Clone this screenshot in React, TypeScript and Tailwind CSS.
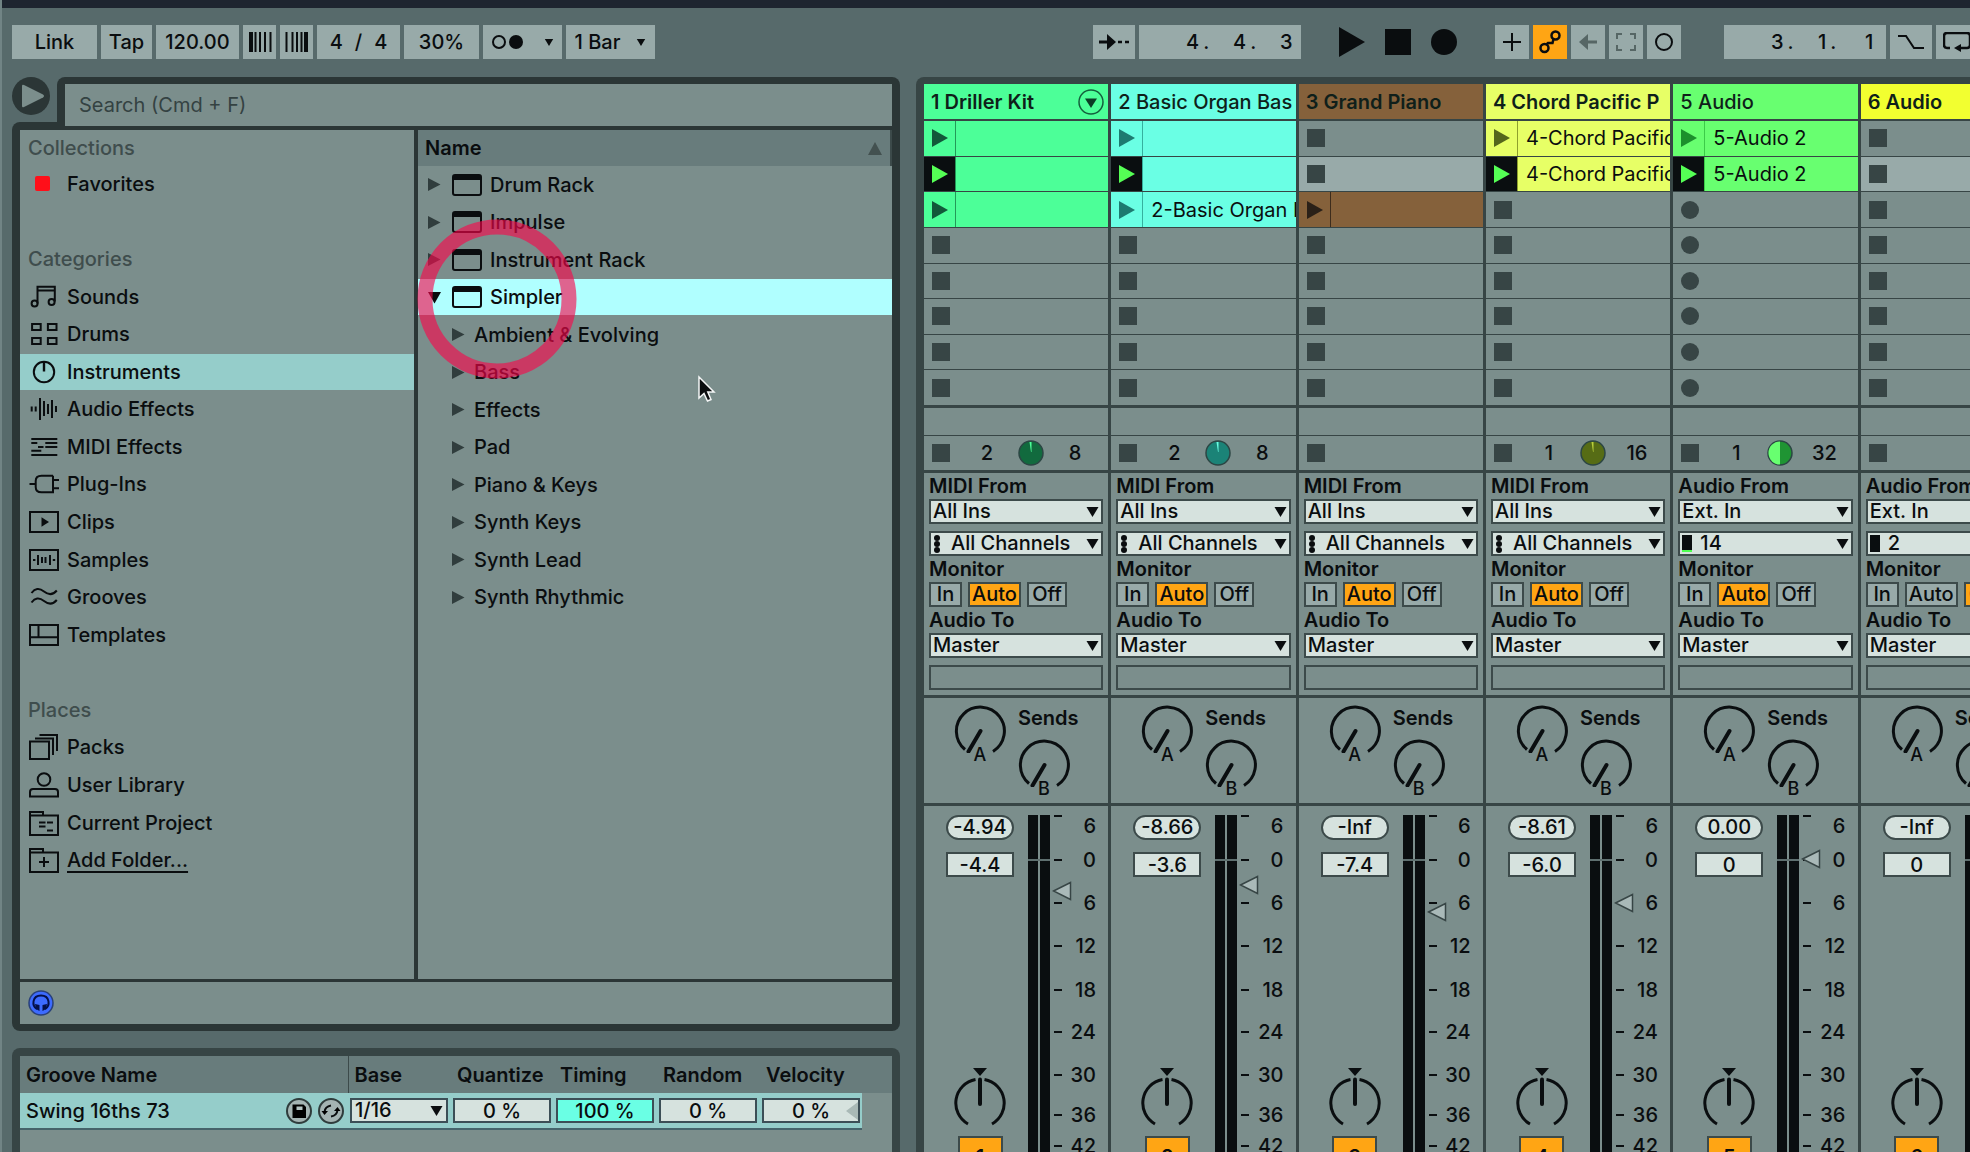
import type { ReactNode } from 'react';
import { clsx } from 'clsx';

interface Clip {
  name?: string;
  playing?: boolean;
}

interface Track {
  id: number;
  title: string;
  strong: boolean;
  kind: 'midi' | 'audio';
  bg: string;
  tri: string;
  // divider between launch button and clip name
  line: string;
  clips: (Clip | null)[];
  armed?: boolean;
  status?: { left: string; right: string; pie: string; hand: string; half?: boolean };
  channel: string;
  signal?: boolean;
  monitor: 'In' | 'Auto' | 'Off';
  peak: string;
  volume: string;
  faderY: number;
}

const TRACKS: Track[] = [
  {
    id: 1,
    title: '1 Driller Kit',
    strong: true,
    kind: 'midi',
    bg: 'bg-[#4cff98]',
    tri: 'text-[#12583a]',
    line: 'border-[#239a58]',
    clips: [{}, { playing: true }, {}],
    status: { left: '2', right: '8', pie: '#126a3e', hand: '#4cff98' },
    channel: 'All Channels',
    monitor: 'Auto',
    peak: '-4.94',
    volume: '-4.4',
    faderY: 85,
  },
  {
    id: 2,
    title: '2 Basic Organ Bas',
    strong: false,
    kind: 'midi',
    bg: 'bg-[#6affe4]',
    tri: 'text-[#1d7a70]',
    line: 'border-[#35b09e]',
    clips: [{}, { playing: true }, { name: '2-Basic Organ B' }],
    status: { left: '2', right: '8', pie: '#1b8377', hand: '#6affe4' },
    channel: 'All Channels',
    monitor: 'Auto',
    peak: '-8.66',
    volume: '-3.6',
    faderY: 79,
  },
  {
    id: 3,
    title: '3 Grand Piano',
    strong: true,
    kind: 'midi',
    bg: 'bg-[#85613b]',
    tri: 'text-[#2a2018]',
    line: 'border-[#3d2c1c]',
    clips: [null, null, {}],
    channel: 'All Channels',
    monitor: 'Auto',
    peak: '-Inf',
    volume: '-7.4',
    faderY: 106,
  },
  {
    id: 4,
    title: '4 Chord Pacific P',
    strong: true,
    kind: 'midi',
    bg: 'bg-[#e7ff66]',
    tri: 'text-[#55661c]',
    line: 'border-[#8ea02c]',
    clips: [{ name: '4-Chord Pacific' }, { name: '4-Chord Pacific', playing: true }],
    status: { left: '1', right: '16', pie: '#566c15', hand: '#b9cf3c' },
    channel: 'All Channels',
    monitor: 'Auto',
    peak: '-8.61',
    volume: '-6.0',
    faderY: 97,
  },
  {
    id: 5,
    title: '5 Audio',
    strong: false,
    kind: 'audio',
    bg: 'bg-[#68ff70]',
    tri: 'text-[#1c8f2c]',
    line: 'border-[#3ccb48]',
    clips: [{ name: '5-Audio 2' }, { name: '5-Audio 2', playing: true }],
    armed: true,
    status: { left: '1', right: '32', pie: '#1f9433', hand: '#68ff70', half: true },
    channel: '14',
    signal: true,
    monitor: 'Auto',
    peak: '0.00',
    volume: '0',
    faderY: 53,
  },
  {
    id: 6,
    title: '6 Audio',
    strong: true,
    kind: 'audio',
    bg: 'bg-[#f2ff30]',
    tri: 'text-[#666b14]',
    line: 'border-[#9a9f20]',
    clips: [],
    channel: '2',
    monitor: 'Off',
    peak: '-Inf',
    volume: '0',
    faderY: 53,
  },
];

const SCALE = [
  { label: '0', h: 'h-[44px]' },
  { label: '6', h: 'h-[42px]' },
  { label: '12', h: 'h-[44px]' },
  { label: '18', h: 'h-[43px]' },
  { label: '24', h: 'h-[41px]' },
  { label: '30', h: 'h-[45px]' },
  { label: '36', h: 'h-[35px]' },
  { label: '42', h: 'h-[28px]' },
];

const ICONS: Record<string, ReactNode> = {
  Sounds: (
    <>
      <path d="M8.5 19.5V2.8H25.8V17.5M8.5 6.6H25.8" />
      <circle cx="5.6" cy="19.6" r="3" />
      <circle cx="22.6" cy="17.9" r="3" />
    </>
  ),
  Drums: (
    <>
      <rect x="3.1" y="3" width="8.6" height="6" />
      <rect x="18.9" y="3" width="8.6" height="6" />
      <rect x="3.1" y="17" width="8.6" height="6" />
      <rect x="18.9" y="17" width="8.6" height="6" />
    </>
  ),
  Instruments: (
    <>
      <circle cx="15" cy="13" r="10.2" />
      <path d="M15 3V12.5" strokeWidth="2.4" />
    </>
  ),
  'Audio Effects': (
    <path d="M2.7 10.5v5M6.7 10.5v5M11 2v22M15 5v15M19 8v10M23 4v18M27 10v6" />
  ),
  'MIDI Effects': (
    <path d="M2.3 5h26M2.3 9h6M16.3 9h12M9 13h5.5M16.3 13h12M2.3 16.7h10M2.3 21h26" />
  ),
  'Plug-Ins': (
    <path d="M.5 13H6.500M24 4.700H12.500Q6.700 4.700 6.700 10V16Q6.700 21.300 12.500 21.300H24V4.700M24 9h6M24 17.300h6" />
  ),
  Clips: (
    <>
      <rect x="1" y="3" width="28" height="20" />
      <path d="M12.500 8.200L20 13L12.500 17.800Z" fill="currentColor" stroke="none" />
    </>
  ),
  Samples: (
    <>
      <rect x="1" y="3" width="28" height="20" />
      <path d="M4 13h2.400M9 8v10M13 10v6M16.500 10v6M21 8v10M23.800 13h2.400" />
    </>
  ),
  Grooves: (
    <path d="M2.500 9C6 4.500 10 3.500 15 7.500S24 11 27.800 6.500M2.500 18.500C6 14 10 13 15 17S24 20.500 27.800 16" />
  ),
  Templates: (
    <>
      <rect x="1" y="3" width="28" height="20" />
      <path d="M1 15.300H29M9.500 3V15.300" />
    </>
  ),
  Packs: (
    <path d="M1 7.500H20V25H1ZM6 4.500H24V21M10.500 1H28V17" />
  ),
  'User Library': (
    <>
      <circle cx="15" cy="7.500" r="6.300" />
      <path d="M1 24.500V20Q1 17 4 17H26Q29 17 29 20V24.500Z" />
    </>
  ),
  'Current Project': (
    <path d="M1 25V2H14V5.500H29V25ZM1 5.500H14M10 12.500h6.500M10 16.500h6.500M18 12.500h6M18 20.500h6" />
  ),
  'Add Folder...': (
    <path d="M1 25V2H14V5.500H29V25ZM1 5.500H14M10 15h10M15 10v10" />
  ),
};

const SIDEBAR = [
  'Favorites',
  '',
  '#Categories',
  'Sounds',
  'Drums',
  'Instruments',
  'Audio Effects',
  'MIDI Effects',
  'Plug-Ins',
  'Clips',
  'Samples',
  'Grooves',
  'Templates',
  '',
  '#Places',
  'Packs',
  'User Library',
  'Current Project',
  'Add Folder...',
];

const RACKS = ['Drum Rack', 'Impulse', 'Instrument Rack', 'Simpler'];
const FOLDERS = [
  'Ambient & Evolving',
  'Bass',
  'Effects',
  'Pad',
  'Piano & Keys',
  'Synth Keys',
  'Synth Lead',
  'Synth Rhythmic',
];

function ToolButton({
  label,
  className,
  children,
}: {
  label?: string;
  className: string;
  children: ReactNode;
}) {
  return (
    <button
      type="button"
      aria-label={label}
      className={clsx(
        'flex h-[34px] shrink-0 items-center justify-center whitespace-nowrap',
        className,
      )}
    >
      {children}
    </button>
  );
}

function Down({ className }: { className?: string }) {
  return (
    <svg viewBox="0 0 12 10" className={className} fill="currentColor" aria-hidden>
      <path d="M0 0H12L6 10Z" />
    </svg>
  );
}

function BarPosition({ parts }: { parts: string[] }) {
  return (
    <div className="flex h-[34px] w-[162px] shrink-0 items-center justify-end bg-[#98aaa9] pr-2">
      {parts.map((p, i) => (
        <span key={i} className={clsx('flex gap-1', i < 2 ? 'w-[47px]' : 'w-[13px]')}>
          <span>{p}</span>
          {i < 2 && <span>.</span>}
        </span>
      ))}
    </div>
  );
}

function Toolbar() {
  const tool = 'bg-[#98aaa9]';
  return (
    <header className="flex h-[69px] shrink-0 gap-1 pt-[17px] pl-3">
      <ToolButton className={clsx(tool, 'w-[85px]')}>Link</ToolButton>
      <ToolButton className={clsx(tool, 'w-[51px]')}>Tap</ToolButton>
      <ToolButton className={clsx(tool, 'w-[83px]')}>120.00</ToolButton>
      <ToolButton label="Nudge down" className={clsx(tool, 'w-[33px]')}>
        <svg width="24" height="20" stroke="currentColor" aria-hidden>
          <path d="M3 0V20" strokeWidth="4" />
          <path d="M7.500 0V20M12 0V20M17 0V20M22.500 0V20" strokeWidth="2" />
        </svg>
      </ToolButton>
      <ToolButton label="Nudge up" className={clsx(tool, 'w-[33px]')}>
        <svg width="24" height="20" stroke="currentColor" aria-hidden>
          <path d="M21 0V20" strokeWidth="4" />
          <path d="M16.500 0V20M12 0V20M7.500 0V20M1.500 0V20" strokeWidth="2" />
        </svg>
      </ToolButton>
      <ToolButton className={clsx(tool, 'w-[83px] gap-3')}>
        <span>4</span>
        <span>/</span>
        <span>4</span>
      </ToolButton>
      <ToolButton className={clsx(tool, 'w-[75px]')}>30%</ToolButton>
      <ToolButton label="Metronome" className={clsx(tool, 'w-[79px] gap-5')}>
        <svg width="33" height="16" aria-hidden>
          <circle cx="8" cy="8" r="6" fill="none" stroke="currentColor" strokeWidth="2" />
          <circle cx="25" cy="8" r="7" fill="currentColor" />
        </svg>
        <Down className="h-[7px] w-[10px]" />
      </ToolButton>
      <ToolButton className={clsx(tool, 'w-[89px] gap-4')}>
        <span>1 Bar</span>
        <Down className="h-[7px] w-[10px]" />
      </ToolButton>

      <ToolButton label="Follow" className={clsx(tool, 'ml-[434px] w-[42px]')}>
        <svg width="30" height="18" aria-hidden>
          <path d="M0 9H9" stroke="currentColor" strokeWidth="3" />
          <path d="M8 1L17 9L8 17Z" fill="currentColor" />
          <path d="M19 9H23M26 9H30" stroke="currentColor" strokeWidth="2.500" />
        </svg>
      </ToolButton>
      <BarPosition parts={['4', '4', '3']} />
      <div className="mx-[34px] flex h-[34px] shrink-0 items-center gap-5">
        <button type="button" aria-label="Play">
          <svg width="26" height="30" fill="currentColor">
            <path d="M0 0L26 15L0 30Z" />
          </svg>
        </button>
        <button type="button" aria-label="Stop" className="size-[26px] bg-[#0a0d0f]" />
        <button type="button" aria-label="Record" className="size-[26px] rounded-full bg-[#0a0d0f]" />
      </div>
      <ToolButton label="Overdub" className={clsx(tool, 'w-[34px]')}>
        <svg width="18" height="18" stroke="currentColor" strokeWidth="2">
          <path d="M9 0V18M0 9H18" />
        </svg>
      </ToolButton>
      <ToolButton label="Automation arm" className="w-[34px] bg-[#ffa514]">
        <svg width="24" height="24" fill="none" stroke="currentColor" strokeWidth="2.500">
          <circle cx="17.500" cy="5.500" r="4" />
          <circle cx="6.500" cy="18" r="4" />
          <path d="M15.500 9L14.500 13H10L8.500 14.500" />
        </svg>
      </ToolButton>
      <ToolButton label="Re-enable automation" className={clsx(tool, 'w-[34px] text-[#566665]')}>
        <svg width="18" height="16" fill="currentColor">
          <path d="M0 8L9 0V6.500H18V9.500H9V16Z" />
        </svg>
      </ToolButton>
      <ToolButton label="Capture MIDI" className={clsx(tool, 'w-[34px] text-[#566665]')}>
        <svg width="20" height="18" fill="none" stroke="currentColor" strokeWidth="2">
          <path d="M1 6V1H6M14 1H19V6M19 12V17H14M6 17H1V12" />
        </svg>
      </ToolButton>
      <ToolButton label="Session record" className={clsx(tool, 'w-[34px]')}>
        <svg width="18" height="18" fill="none" stroke="currentColor" strokeWidth="2">
          <circle cx="9" cy="9" r="8" />
        </svg>
      </ToolButton>
      <div className="ml-[39px] flex gap-1">
        <BarPosition parts={['3', '1', '1']} />
        <ToolButton label="Punch in" className={clsx(tool, 'w-[42px]')}>
          <svg width="26" height="16" fill="none" stroke="currentColor" strokeWidth="2">
            <path d="M0 2H8L16 14H26" />
          </svg>
        </ToolButton>
        <ToolButton label="Loop" className={clsx(tool, 'w-[42px]')}>
          <svg width="28" height="20" fill="none" stroke="currentColor" strokeWidth="2.500">
            <path d="M7 16H4Q1 16 1 13V4Q1 1 4 1H24Q27 1 27 4V13Q27 16 24 16H18" />
            <path d="M18 12V20L11 16Z" fill="currentColor" stroke="none" />
          </svg>
        </ToolButton>
      </div>
    </header>
  );
}

function Tri({ down, className }: { down?: boolean; className?: string }) {
  return (
    <svg
      width="13"
      height="13"
      fill="currentColor"
      className={clsx('shrink-0', className)}
      aria-hidden
    >
      <path d={down ? 'M0 1H13L6.500 12.500Z' : 'M0 0L12.500 6.500L0 13Z'} />
    </svg>
  );
}

function SidebarRow({ item }: { item: string }) {
  if (!item) return <li />;
  if (item[0] === '#') {
    return <li className="flex items-center pl-2 text-[#3f4d4d]">{item.slice(1)}</li>;
  }
  const add = item === 'Add Folder...';
  return (
    <li className="flex items-center">
      <a
        href="#"
        className={clsx(
          'flex h-9 w-full items-center gap-2 pl-[9px]',
          item === 'Instruments' && 'bg-[#95cdca]',
        )}
      >
        {item === 'Favorites' ? (
          <span className="flex w-[30px] pl-[6px]">
            <span className="size-[15px] rounded-[2px] bg-[#ff0f19]" />
          </span>
        ) : (
          <svg
            width="30"
            height="26"
            fill="none"
            stroke="currentColor"
            strokeWidth="2"
            className="shrink-0"
            aria-hidden
          >
            {ICONS[item]}
          </svg>
        )}
        <span className={clsx(add && 'underline decoration-2 underline-offset-4')}>{item}</span>
      </a>
    </li>
  );
}

function Browser() {
  return (
    <section className="relative">
      <div className="flex h-[45px] gap-[7px]">
        <button
          type="button"
          aria-label="Show browser"
          className="flex size-[38px] shrink-0 items-center justify-center rounded-full bg-[#2b3636] pl-[3px] text-[#7b8e8c]"
        >
          <svg width="22" height="24" fill="currentColor">
            <path d="M0 2Q0 0 2 1L21 10.500Q23 12 21 13.500L2 23Q0 24 0 22Z" />
          </svg>
        </button>
        <div className="min-w-0 flex-1 rounded-t-[8px] bg-[#2b3636] px-2 pt-[7px]">
          <input
            type="search"
            aria-label="Search"
            placeholder="Search (Cmd + F)"
            className="relative z-10 block h-[42px] w-full rounded-none bg-[#7b8e8c] pl-[14px] font-normal outline-none placeholder:text-[#344242]"
          />
        </div>
      </div>
      <div className="rounded-b-[8px] rounded-tl-[8px] bg-[#2b3636] px-2 pt-2 pb-[7px]">
        <div className="flex h-[849px] gap-1">
          <nav className="w-[394px] shrink-0 bg-[#7b8e8c]">
            <h2 className="flex h-[35px] items-center pl-2 text-[#3f4d4d]">Collections</h2>
            <ul className="grid h-[714px] grid-rows-[repeat(19,1fr)]">
              {SIDEBAR.map((s, i) => (
                <SidebarRow key={i} item={s} />
              ))}
            </ul>
          </nav>
          <div className="min-w-0 flex-1 bg-[#7b8e8c]">
            <div className="flex h-9 items-center justify-between border-r-2 border-[#3c4a4a] bg-[#687c7c] pr-2 pl-[7px] font-semibold">
              Name
              <svg width="14" height="13" fill="#435150">
                <path d="M7 0L14 13H0Z" />
              </svg>
            </div>
            <ul className="grid h-[450px] grid-rows-[repeat(12,1fr)]">
              {RACKS.map((r) => {
                const open = r === 'Simpler';
                return (
                  <li key={r} className="flex items-center">
                    <button
                      type="button"
                      className={clsx(
                        'flex h-9 w-full items-center pl-[10px]',
                        open && 'bg-[#b0ffff]',
                      )}
                    >
                      <Tri down={open} className={open ? undefined : 'text-[#303d3d]'} />
                      <svg
                        width="30"
                        height="22"
                        fill="none"
                        stroke="currentColor"
                        strokeWidth="2"
                        className="mr-2 ml-[11px]"
                      >
                        <rect x="1" y="1" width="28" height="20" rx="2" />
                        <path d="M1 3.500H29" strokeWidth="5" />
                      </svg>
                      {r}
                    </button>
                  </li>
                );
              })}
              {FOLDERS.map((f) => (
                <li key={f} className="flex items-center">
                  <button type="button" className="flex h-9 w-full items-center gap-[9px] pl-[34px]">
                    <Tri className="text-[#303d3d]" />
                    {f}
                  </button>
                </li>
              ))}
            </ul>
          </div>
        </div>
        <div className="mt-[3px] flex h-[42px] items-center bg-[#7b8e8c] pl-2">
          <button type="button" aria-label="Preview">
            <svg width="26" height="26">
              <circle cx="13" cy="13" r="12" fill="#3d6bff" stroke="#28407a" strokeWidth="1.500" />
              <path
                d="M9 19C3.500 16 4 5.500 13 5.500S22.500 16 17 19"
                fill="none"
                stroke="#04104a"
                strokeWidth="2"
              />
              <path d="M7 14L11.500 15V21L8 19ZM19 14L14.500 15V21L18 19Z" fill="#04104a" />
            </svg>
          </button>
        </div>
      </div>

      {/* click marker and pointer float above the list */}
      <svg
        width="160"
        height="160"
        className="pointer-events-none absolute top-[142px] left-[405px] z-20"
        aria-hidden
      >
        <circle cx="80" cy="80" r="72" fill="none" stroke="#fa054b" strokeOpacity=".62" strokeWidth="15" />
      </svg>
      <svg
        width="20"
        height="28"
        className="pointer-events-none absolute top-[298px] left-[685px] z-20"
        aria-hidden
      >
        <path
          d="M2 2V23L7 18.500L10.500 26L14 24.500L10.800 17H17Z"
          fill="#0a0d0f"
          stroke="#f4f6f6"
          strokeWidth="1.500"
        />
      </svg>
    </section>
  );
}

function GroovePool() {
  const box = 'block h-[25px] w-[98px] border-2 border-[#3c4e56] text-center';
  return (
    <section className="mt-[17px] flex-1 rounded-t-[8px] bg-[#374545] px-2 pt-2">
      <div className="h-full bg-[#7b8e8c]">
        <table className="w-full table-fixed border-collapse text-left">
          <colgroup>
            <col className="w-[328px]" />
            <col className="w-[103px]" />
            <col className="w-[103px]" />
            <col className="w-[103px]" />
            <col className="w-[103px]" />
            <col className="w-[102px]" />
            <col />
          </colgroup>
          <thead>
            <tr className="h-[37px] bg-[#687c7c]">
              <th className="border-r border-[#3c4a4a] pl-[6px] font-semibold">Groove Name</th>
              {['Base', 'Quantize', 'Timing', 'Random', 'Velocity'].map((h) => (
                <th key={h} className="pl-[6px] font-semibold">
                  {h}
                </th>
              ))}
              <td />
            </tr>
          </thead>
          <tbody>
            <tr className="h-9">
              <td className="border-b-2 border-[#46636b] bg-[#95cdca]">
                <div className="flex items-center gap-[6px] pr-1 pl-[6px]">
                  <span className="flex-1">Swing 16ths 73</span>
                  <button type="button" aria-label="Save groove">
                    <svg width="26" height="26">
                      <circle cx="13" cy="13" r="12" fill="#a4b4b3" stroke="#2f3c3c" strokeWidth="2" />
                      <path d="M6.500 6.500H17.500L20 9V20H6.500Z" />
                      <path d="M10.500 8.500H16.500V12H10.500Z" fill="#b4c4c3" />
                    </svg>
                  </button>
                  <button type="button" aria-label="Hot-swap groove">
                    <svg width="26" height="26">
                      <circle cx="13" cy="13" r="12" fill="#a4b4b3" stroke="#2f3c3c" strokeWidth="2" />
                      <path
                        d="M6.500 14Q7 8.500 13 7.500M19.500 12Q19 17.500 13 18.500"
                        fill="none"
                        stroke="currentColor"
                        strokeWidth="2"
                      />
                      <path d="M3.500 13H10L6.500 17ZM22.500 13H16L19.500 9Z" />
                    </svg>
                  </button>
                </div>
              </td>
              <td className="border-b-2 border-[#46636b] bg-[#95cdca] pl-[2px]">
                <div className="relative w-[98px]">
                  <select
                    aria-label="Base"
                    className="block h-[25px] w-full appearance-none rounded-none border-2 border-[#3c4e56] bg-[#d6e2de] pl-[3px] leading-[21px]"
                  >
                    <option>1/16</option>
                  </select>
                  <Down className="pointer-events-none absolute top-[8px] right-[5px] h-[10px] w-[13px]" />
                </div>
              </td>
              {['0 %', '100 %', '0 %', '0 %'].map((v, i) => (
                <td key={i} className="border-b-2 border-[#46636b] bg-[#95cdca] pl-[2px]">
                  <div className="relative w-[98px]">
                    <input
                      aria-label={['Quantize', 'Timing', 'Random', 'Velocity'][i]}
                      defaultValue={v}
                      className={clsx(box, i === 1 ? 'bg-[#6affe4]' : 'bg-[#d6e2de]')}
                    />
                    {i === 3 && (
                      <svg
                        width="12"
                        height="18"
                        fill="#a9b9b6"
                        className="absolute top-[4px] right-[2px]"
                        aria-hidden
                      >
                        <path d="M12 0V18L0 9Z" />
                      </svg>
                    )}
                  </div>
                </td>
              ))}
              <td />
            </tr>
          </tbody>
        </table>
      </div>
    </section>
  );
}

function Slot({ track, row }: { track: Track; row: number }) {
  const clip = track.clips[row];
  if (!clip) {
    return (
      <div className={clsx('flex items-center pl-2', row === 1 ? 'bg-[#98aaa9]' : 'bg-[#7b8e8c]')}>
        <button
          type="button"
          aria-label={track.armed ? 'Record into slot' : 'Stop track'}
          className={clsx('size-[18px] bg-[#374545]', track.armed && 'rounded-full')}
        />
      </div>
    );
  }
  return (
    <div className={clsx('flex min-w-0 overflow-hidden', track.bg)}>
      <button
        type="button"
        aria-label="Launch clip"
        className={clsx(
          'flex w-8 shrink-0 items-center border-r pl-2',
          track.line,
          clip.playing ? 'bg-[#0a0e10] text-[#55ff55]' : track.tri,
        )}
      >
        <svg width="16" height="18" fill="currentColor">
          <path d="M0 0L16 9L0 18Z" />
        </svg>
      </button>
      <span className="flex items-center pl-2 font-normal whitespace-nowrap">{clip.name}</span>
    </div>
  );
}

function StatusRow({ track }: { track: Track }) {
  const s = track.status;
  return (
    <div className="flex h-[34px] items-center gap-[9px] bg-[#7b8e8c] pl-2">
      <button type="button" aria-label="Stop track" className="size-[18px] bg-[#374545]" />
      {s && (
        <>
          <span className="ml-[6px] w-11 text-center">{s.left}</span>
          <svg width="26" height="26" aria-hidden>
            <circle cx="13" cy="13" r="12" fill={s.pie} stroke="#2c4644" strokeWidth="1.500" />
            {s.half ? (
              <path d="M13 1.500A11.500 11.500 0 0 0 13 24.500Z" fill={s.hand} />
            ) : (
              <path d="M11.500 2H13.500V12H13Z" fill={s.hand} />
            )}
          </svg>
          <span className="w-11 text-center">{s.right}</span>
        </>
      )}
    </div>
  );
}

function RoutingSelect({
  label,
  value,
  icon,
  className,
}: {
  label: string;
  value: string;
  icon?: ReactNode;
  className?: string;
}) {
  return (
    <div className={clsx('relative', className)}>
      <select
        aria-label={label}
        className={clsx(
          'block h-[25px] w-full appearance-none rounded-none border-2 border-[#3c4a4a] bg-[#d6e2de] leading-[21px]',
          icon ? 'pl-5' : 'pl-[2px]',
        )}
      >
        <option>{value}</option>
      </select>
      {icon}
      <Down className="pointer-events-none absolute top-[8px] right-[4px] h-[10px] w-[13px]" />
    </div>
  );
}

function Routing({ track }: { track: Track }) {
  const midi = track.kind === 'midi';
  return (
    <div className="h-[222px] bg-[#7b8e8c] px-[5px]">
      <h3 className="h-[26px] font-semibold whitespace-nowrap">{midi ? 'MIDI From' : 'Audio From'}</h3>
      <RoutingSelect label="Input type" value={midi ? 'All Ins' : 'Ext. In'} />
      <RoutingSelect
        label="Input channel"
        value={track.channel}
        className="mt-[7px]"
        icon={
          midi ? (
            <svg
              width="6"
              height="18"
              fill="currentColor"
              className="pointer-events-none absolute top-[4px] left-[5px]"
            >
              <circle cx="3" cy="3" r="3" />
              <circle cx="3" cy="9" r="3" />
              <circle cx="3" cy="15" r="3" />
            </svg>
          ) : (
            <span
              className={clsx(
                'absolute top-[4px] left-[4px] h-[17px] w-[10px] bg-[#0a0e10]',
                track.signal && 'border-b-2 border-[#4cff50]',
              )}
            />
          )
        }
      />
      <h3 className="h-[26px] font-semibold">Monitor</h3>
      <div className="flex gap-[6px]">
        {(['In', 'Auto', 'Off'] as const).map((m) => (
          <button
            key={m}
            type="button"
            className={clsx(
              'h-[25px] shrink-0 border-2 border-[#3c4a4a] leading-[21px]',
              m === 'In' && 'w-[33px]',
              m === 'Auto' && 'w-[53px]',
              m === 'Off' && 'w-10',
              m === track.monitor ? 'bg-[#ffa514]' : 'bg-[#98aaa9]',
            )}
          >
            {m}
          </button>
        ))}
      </div>
      <h3 className="h-[26px] font-semibold">Audio To</h3>
      <RoutingSelect label="Output" value="Master" />
      <div className="mt-[7px] h-[25px] border-2 border-[#3c4a4a]" />
    </div>
  );
}

function SendKnob({ name }: { name: string }) {
  return (
    <label className="relative block w-[52px]">
      <input type="range" className="sr-only" defaultValue={0} />
      <svg width="52" height="48" fill="none" stroke="#0a0e10" strokeWidth="3" aria-hidden>
        <path d="M11 44.500A24 24 0 1 1 39 46.500" />
        <path d="M26.500 26L14.500 46.500" strokeWidth="4" strokeLinecap="round" />
      </svg>
      <span className="absolute top-[40px] left-0 w-full text-center text-[18px] leading-5">{name}</span>
    </label>
  );
}

function Sends() {
  return (
    <div className="flex h-[105px] gap-3 bg-[#7b8e8c] pt-[7px] pl-[30px]">
      <SendKnob name="A" />
      <div>
        <h3 className="h-[34px] font-semibold">Sends</h3>
        <SendKnob name="B" />
      </div>
    </div>
  );
}

function Mixer({ track }: { track: Track }) {
  const readout = 'h-[25px] w-[68px] border-2 border-[#3c4a4a] bg-[#d6e2de] text-center';
  return (
    <div className="relative flex flex-1 bg-[#7b8e8c] pt-[9px]">
      <div className="flex w-[104px] shrink-0 flex-col items-center pl-2">
        <output className={clsx(readout, 'rounded-full leading-[21px]')}>{track.peak}</output>
        <input aria-label="Volume" defaultValue={track.volume} className={clsx(readout, 'mt-3')} />
        <label className="relative mt-[190px] block">
          <input type="range" aria-label="Pan" className="sr-only" />
          <svg width="52" height="60" fill="none" stroke="#0a0e10" strokeWidth="3" aria-hidden>
            <path d="M19 1H33L26 9Z" fill="#0a0e10" stroke="none" />
            <path d="M21.500 12.500A24 24 0 0 0 14 57M30.500 12.500A24 24 0 0 1 38 57" />
            <path d="M26 12.500V37" strokeWidth="4" strokeLinecap="round" />
          </svg>
        </label>
        <button
          type="button"
          className="mt-[9px] h-8 w-[45px] shrink-0 border-2 border-[#3c4a4a] bg-[#ffa514] pt-[6px] font-semibold"
        >
          {track.id}
        </button>
      </div>
      <div className="relative flex h-[345px] shrink-0 gap-[2px]">
        <span className="w-[10px] bg-[#0a0e10]" />
        <span className="w-[10px] bg-[#0a0e10]" />
        <span className="absolute top-[44px] left-0 h-[2px] w-full bg-[#5f7070]" />
      </div>
      <div className="ml-1 w-[42px] shrink-0 text-right">
        <div className="flex h-[23px] justify-between">
          <span className="h-[2px] w-2 bg-[#0a0e10]" />
          <span className="leading-[23px]">6</span>
        </div>
        {SCALE.map((s) => (
          <div key={s.label + s.h} className={clsx('flex items-center justify-between', s.h)}>
            <span className="h-[2px] w-2 bg-[#0a0e10]" />
            <span>{s.label}</span>
          </div>
        ))}
      </div>
      <svg
        width="20"
        height="20"
        className="absolute left-[128px] -translate-y-1/2"
        style={{ top: track.faderY }}
        aria-hidden
      >
        <path d="M1.500 10L18.500 1.500V18.500Z" fill="#a9b9b8" stroke="#374545" strokeWidth="1.500" />
      </svg>
    </div>
  );
}

function TrackColumn({ track }: { track: Track }) {
  return (
    <div className="flex min-w-0 flex-col overflow-hidden">
      <div
        className={clsx('flex h-[35px] shrink-0 items-center justify-between pr-1 pl-[7px]', track.bg)}
      >
        <h2
          className={clsx(
            'overflow-hidden whitespace-nowrap text-[#0f1f1a]',
            track.strong ? 'font-semibold' : 'font-medium',
          )}
        >
          {track.title}
        </h2>
        {track.id === 1 && (
          <button type="button" aria-label="Track menu">
            <svg width="26" height="26">
              <circle cx="13" cy="13" r="12" fill="none" stroke="#14603c" strokeWidth="1.500" />
              <path d="M7 9.500H19L13 19Z" fill="#0c3c26" />
            </svg>
          </button>
        )}
      </div>
      <div className="mt-[2px] grid h-[284px] shrink-0 grid-rows-[repeat(8,1fr)] gap-px">
        {Array.from({ length: 8 }, (_, row) => (
          <Slot key={row} track={track} row={row} />
        ))}
      </div>
      <div className="mt-[3px] h-[27px] shrink-0 bg-[#7b8e8c]" />
      <div className="mt-px shrink-0">
        <StatusRow track={track} />
      </div>
      <div className="mt-[3px] shrink-0">
        <Routing track={track} />
      </div>
      <div className="mt-[3px] shrink-0">
        <Sends />
      </div>
      <div className="mt-[3px] flex flex-1">
        <Mixer track={track} />
      </div>
    </div>
  );
}

export default function App() {
  return (
    <div className="flex h-screen flex-col overflow-hidden border-l-2 border-[#718485] bg-[#576a6b] font-['Inter',sans-serif] text-[20px] leading-[26px] font-medium text-[#0a0d0f]">
      <div className="-ml-[2px] h-2 shrink-0 bg-[#1e2530]" />
      <div className="-ml-[2px] flex min-h-0 flex-1 flex-col">
        <Toolbar />
        <main className="flex min-h-0 flex-1">
          <div className="ml-3 flex w-[888px] shrink-0 flex-col">
            <Browser />
            <GroovePool />
          </div>
          <div className="ml-4 min-w-0 flex-1 overflow-hidden rounded-tl-[8px] bg-[#374545] pt-[7px] pl-2">
            <div className="grid h-full w-[1121px] grid-cols-6 gap-[3px]">
              {TRACKS.map((t) => (
                <TrackColumn key={t.id} track={t} />
              ))}
            </div>
          </div>
        </main>
      </div>
    </div>
  );
}
